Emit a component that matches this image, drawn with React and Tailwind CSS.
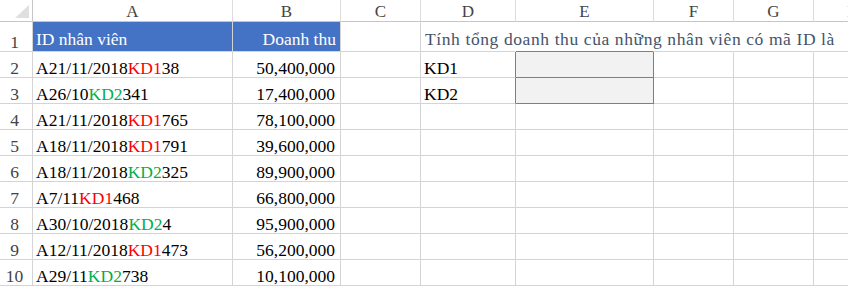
import React from 'react';

const cols = [
  { key: 'A', w: 'w-[200px]' },
  { key: 'B', w: 'w-[108px]' },
  { key: 'C', w: 'w-[80px]' },
  { key: 'D', w: 'w-[95px]' },
  { key: 'E', w: 'w-[138px]' },
  { key: 'F', w: 'w-[80px]' },
  { key: 'G', w: 'w-[80px]' },
  { key: 'H', w: 'w-[80px]' },
];

const rows = [
  { pre: 'A21/11/2018', code: 'KD1', post: '38', amount: '50,400,000', d: 'KD1' },
  { pre: 'A26/10', code: 'KD2', post: '341', amount: '17,400,000', d: 'KD2' },
  { pre: 'A21/11/2018', code: 'KD1', post: '765', amount: '78,100,000' },
  { pre: 'A18/11/2018', code: 'KD1', post: '791', amount: '39,600,000' },
  { pre: 'A18/11/2018', code: 'KD2', post: '325', amount: '89,900,000' },
  { pre: 'A7/11', code: 'KD1', post: '468', amount: '66,800,000' },
  { pre: 'A30/10/2018', code: 'KD2', post: '4', amount: '95,900,000' },
  { pre: 'A12/11/2018', code: 'KD1', post: '473', amount: '56,200,000' },
  { pre: 'A29/11', code: 'KD2', post: '738', amount: '10,100,000' },
];

const Cell = ({ w, className = '', children }) => (
  <div className={`${w} shrink-0 h-full flex items-end border-r border-b border-[#d4d4d4] leading-none ${className}`}>
    {children}
  </div>
);

const RowHead = ({ n }) => (
  <div className="w-[33px] shrink-0 h-full flex items-end justify-center pr-[3px] border-r border-b border-[#d4d4d4] text-[#444] leading-none">
    {n}
  </div>
);

export default function App() {
  return (
    <div className="w-[848px] h-[286px] overflow-hidden bg-white text-[17.5px] text-black [font-family:'Liberation_Serif','Times_New_Roman',serif]">
      {/* column headers */}
      <div className="flex h-[22px] w-max">
        <div className="w-[33px] shrink-0 h-full border-r border-b border-[#c6c6c6] relative">
          <svg className="absolute left-[15px] top-[5px]" width="14" height="13" viewBox="0 0 14 13">
            <polygon points="14,0 14,13 0,13" fill="#dfdfdf" />
          </svg>
        </div>
        {cols.map((c) => (
          <div
            key={c.key}
            className={`${c.w} shrink-0 h-full flex items-end justify-center pb-[1px] border-r border-b border-r-[#dcdcdc] border-b-[#c6c6c6] text-[#444] text-[17px] leading-none`}
          >
            {c.key}
          </div>
        ))}
      </div>

      {/* row 1 */}
      <div className="flex h-[30px] w-max">
        <RowHead n={1} />
        <Cell w="w-[200px]" className="bg-[#4472c4] border-[#4472c4] text-white pl-[3px] pb-[3px]">
          ID nhân viên
        </Cell>
        <Cell w="w-[108px]" className="bg-[#4472c4] border-[#4472c4] text-white justify-end pr-[4px] pb-[3px]">
          Doanh thu
        </Cell>
        <Cell w="w-[80px]" />
        <Cell w="w-[95px]" className="border-r-transparent pl-[4px] pb-[3px] whitespace-nowrap overflow-visible tracking-[0.6px] text-[#44546a]">
          Tính tổng doanh thu của những nhân viên có mã ID là
        </Cell>
        <Cell w="w-[138px]" className="border-r-transparent border-b-[#7f7f7f]" />
        <Cell w="w-[80px]" className="border-r-transparent" />
        <Cell w="w-[80px]" className="border-r-transparent" />
        <Cell w="w-[80px]" className="border-r-transparent" />
      </div>

      {/* data rows */}
      {rows.map((r, i) => (
        <div key={i} className="flex h-[26px] w-max">
          <RowHead n={i + 2} />
          <Cell w="w-[200px]" className="pl-[3px]">
            <span>
              {r.pre}
              <span className={r.code === 'KD1' ? 'text-[#ff0000]' : 'text-[#00b050]'}>{r.code}</span>
              {r.post}
            </span>
          </Cell>
          <Cell w="w-[108px]" className="justify-end pr-[5px]">
            {r.amount}
          </Cell>
          <Cell w="w-[80px]" />
          <Cell w="w-[95px]" className={`pl-[3px] ${i < 2 ? 'border-r-[#7f7f7f]' : ''}`}>
            {r.d}
          </Cell>
          <Cell
            w="w-[138px]"
            className={i < 2 ? 'bg-[#f2f2f2] border-r-[#7f7f7f] border-b-[#7f7f7f]' : ''}
          />
          <Cell w="w-[80px]" />
          <Cell w="w-[80px]" />
          <Cell w="w-[80px]" />
        </div>
      ))}
    </div>
  );
}
